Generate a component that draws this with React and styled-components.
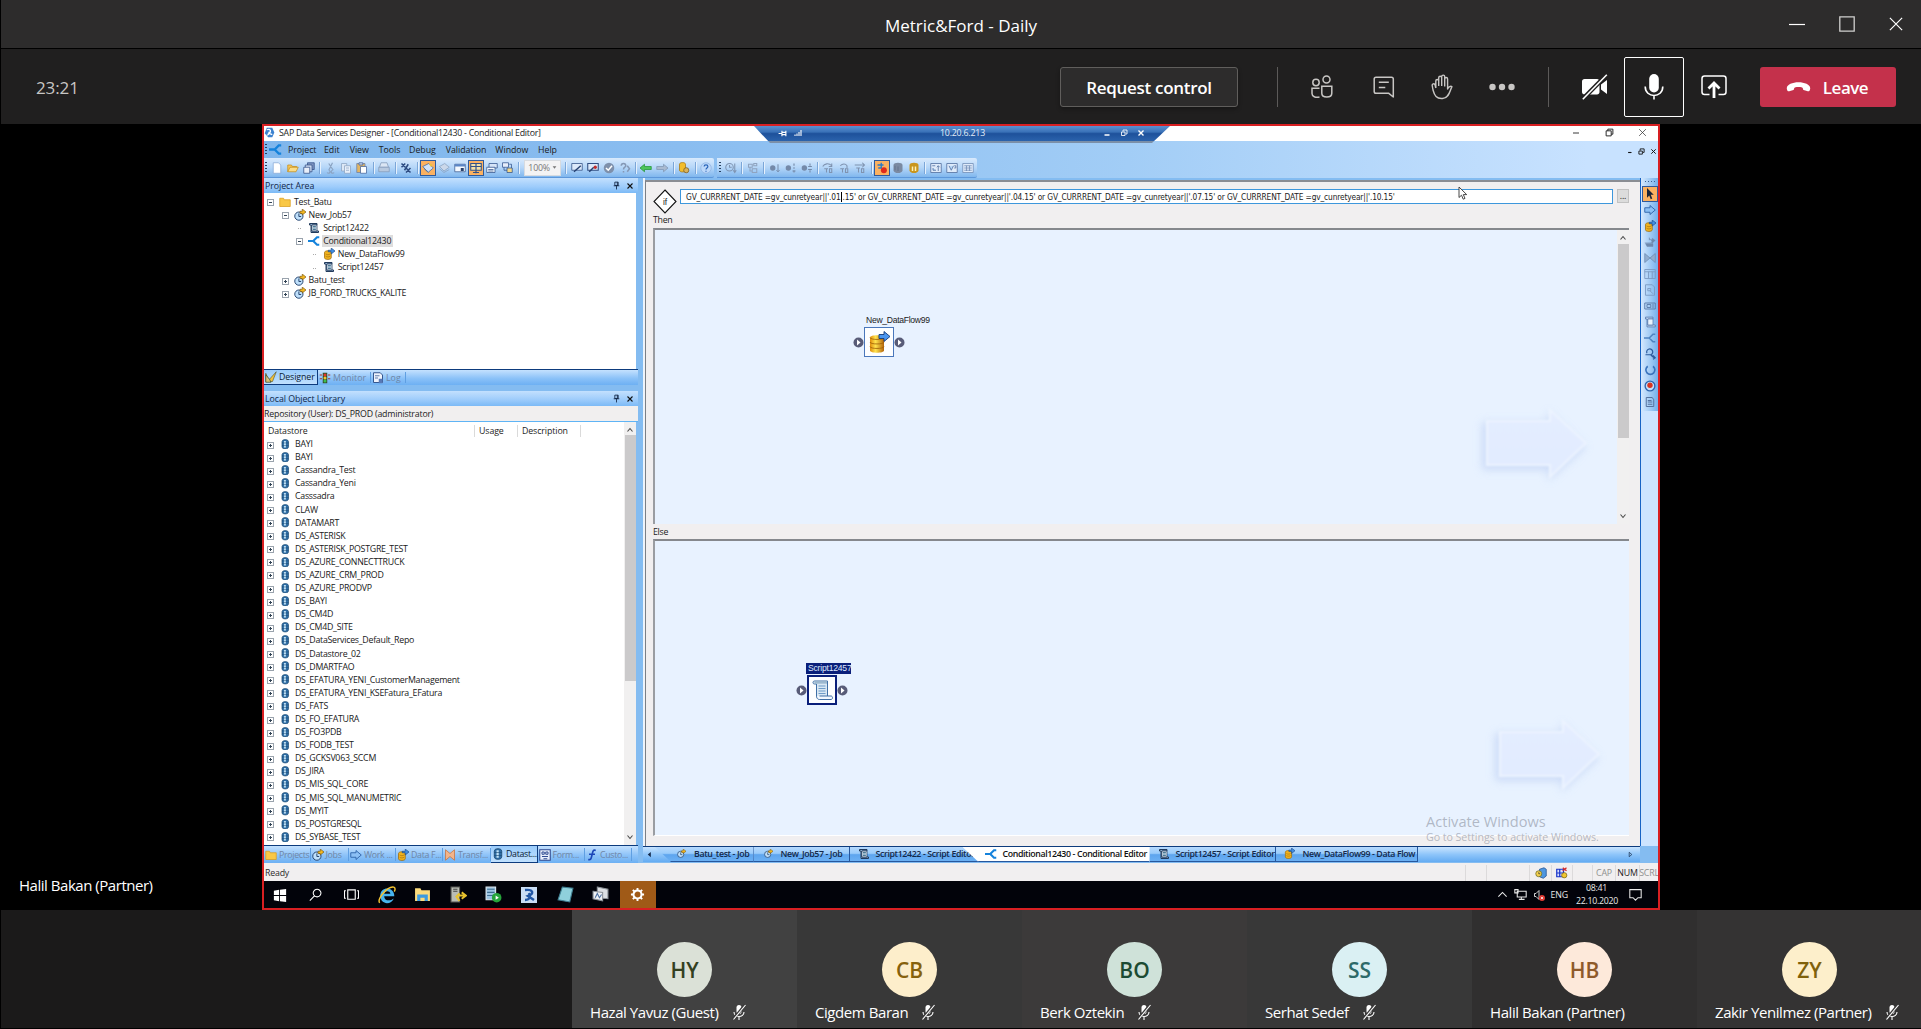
import React from "react";
import styled, { createGlobalStyle, css } from "styled-components";

const Global = createGlobalStyle`
  * { box-sizing: border-box; }
  body { margin: 0; background: #000; overflow: hidden; }
  svg { display: block; flex: none; }
`;

const ui = `"Open Sans", "Noto Sans", sans-serif`;

/* ---------- meeting shell ---------- */

const Shell = styled.div`
  width: 1921px;
  height: 1029px;
  display: flex;
  flex-direction: column;
  background: #000;
  border-left: 1px solid #000;
  border-bottom: 1px solid #000;
  font-family: ${ui};
  color: #fff;
  overflow: hidden;
  white-space: nowrap;
`;

const TitleBar = styled.header`
  height: 49px;
  flex: none;
  display: grid;
  grid-template-columns: 1fr auto 1fr;
  align-items: center;
  background: #2d2c2c;
  border-bottom: 1px solid #000;
`;

const MeetingTitle = styled.div`
  font-size: 17px;
  letter-spacing: 0;
  line-height: 22px;
  padding-top: 3px;
  grid-column: 2;
`;

const WindowButtons = styled.div`
  display: flex;
  justify-content: flex-end;
  align-items: center;
  gap: 34px;
  padding: 0 18px 1px 0;
`;

const CallBar = styled.div`
  height: 75px;
  flex: none;
  display: flex;
  align-items: center;
  background: #201f1f;
  padding: 1px 25px 0 35px;
`;

const Timer = styled.div`
  flex: 1;
  font-size: 17px;
  letter-spacing: -0.1px;
  padding-top: 1px;
  color: #c8c6c4;
`;

const RequestButton = styled.button`
  width: 178px;
  height: 40px;
  padding: 1px 0 0;
  border: 1px solid #605e5c;
  border-radius: 3px;
  background: #2d2c2c;
  color: #fff;
  font: 600 17px ${ui};
  letter-spacing: -0.3px;
  box-shadow: 0 2px 4px rgba(0, 0, 0, 0.3);
`;

const BarDivider = styled.div`
  width: 1px;
  height: 40px;
  background: #5c5a59;
  margin: 0 ${(p) => p.$right}px 0 ${(p) => p.$left}px;
`;

const CallIcons = styled.div`
  display: flex;
  align-items: center;
`;

const CallIcon = styled.div`
  width: 60px;
  height: 60px;
  display: flex;
  align-items: center;
  justify-content: center;
  border-radius: 2px;
  padding-left: ${(p) => p.$nudge || 0}px;
  color: ${(p) => (p.$dim ? "#c8c6c4" : "#fff")};
  border: ${(p) => (p.$focused ? "1px solid #fff" : "0")};
`;

const LeaveButton = styled.button`
  width: 136px;
  height: 40px;
  margin-left: 16px;
  padding: 0 2px 0 0;
  border: 0;
  border-radius: 3px;
  background: #c4314b;
  color: #fff;
  display: flex;
  align-items: center;
  justify-content: center;
  gap: 12px;
  font: 600 17px ${ui};
  letter-spacing: -0.5px;
`;

const Stage = styled.main`
  height: 786px;
  flex: none;
  display: grid;
  grid-template-columns: 261px 1398px 1fr;
  background: #000;
`;

const Presenter = styled.div`
  align-self: end;
  padding: 0 0 15px 18px;
  font-size: 15px;
  line-height: 20px;
  letter-spacing: -0.47px;
`;

const FilmStrip = styled.footer`
  height: 118px;
  flex: none;
  display: flex;
  background: #1b1a1a;
  padding-left: 571px;
`;

const Tile = styled.div`
  width: 225px;
  flex: none;
  height: 118px;
  display: flex;
  flex-direction: column;
  align-items: center;
  padding-top: 32px;
  background: ${(p) => p.$bg};
`;

const Avatar = styled.div`
  width: 55px;
  height: 55px;
  border-radius: 50%;
  display: flex;
  align-items: center;
  justify-content: center;
  background: ${(p) => p.$bg};
  color: ${(p) => p.$fg};
  font-size: 21px;
  font-weight: 600;
`;

const TileName = styled.div`
  align-self: stretch;
  display: flex;
  align-items: center;
  gap: 13px;
  padding: 5px 0 0 18px;
  font-size: 15px;
  line-height: 20px;
  letter-spacing: -0.43px;
`;

/* ---------- remote desktop ---------- */

const Remote = styled.section`
  width: 1398px;
  height: 786px;
  border: 2px solid #d81f22;
  display: flex;
  flex-direction: column;
  position: relative;
  overflow: hidden;
  background: #f1eff0;
  color: #1c1c1c;
  font-size: 8.8px;
  line-height: 12px;
  letter-spacing: -0.2px;
`;

const AppTitle = styled.div`
  height: 15px;
  flex: none;
  display: flex;
  align-items: center;
  gap: 4px;
  background: #fff;
  padding: 0 11px 2px 0;
  span { flex: 1; letter-spacing: -0.24px; }
`;

const AppButtons = styled.div`
  display: flex;
  align-items: center;
  gap: 24.5px;
`;

const Connection = styled.div`
  position: absolute;
  left: 490px;
  top: 0;
  width: 416px;
  height: 17px;
  clip-path: polygon(0 0, 100% 0, 398px 100%, 16px 100%);
  background: linear-gradient(#5b8fcf 0, #3a72b8 35%, #1e519b 45%, #2a62ab 86%, #7b8fa8 90%);
  display: grid;
  grid-template-columns: 186px 1fr 67px;
  align-items: center;
  color: #e4edf8;
  padding-bottom: 3px;
`;

const ConnGroup = styled.div`
  display: flex;
  align-items: center;
  gap: ${(p) => p.$gap}px;
  padding-left: ${(p) => p.$pad}px;
`;

const Bars = styled.div`
  flex: none;
  height: 37px;
  background: linear-gradient(90deg, #7fb6ec 0, #8abdf0 30%, #a2cdf6 62%, #c8e2ff 95%);
`;

const MenuRow = styled.nav`
  height: 17px;
  display: flex;
  align-items: center;
  padding-left: 1px;
`;

const MenuItem = styled.span`
  width: ${(p) => p.$w}px;
  letter-spacing: -0.03px;
  padding-top: 1px;
`;

const MdiButtons = styled.div`
  margin-left: auto;
  display: flex;
  gap: 5px;
  padding: 4px 1px 0 0;
`;

const ToolRow = styled.div`
  height: 20px;
  display: flex;
  gap: 3px;
`;

const ToolStrip = styled.div`
  height: 20px;
  display: flex;
  align-items: center;
  width: ${(p) => p.$w}px;
  padding-left: ${(p) => p.$pad}px;
  border-radius: 0 2px 2px 0;
  background: linear-gradient(#d9eafd, #b5d6f8 50%, #80b7ee);
  border-bottom: 1px solid #5d97da;
`;

const ToolCell = styled.div`
  width: ${(p) => (p.$vertical ? 16 : 15.9)}px;
  height: 16px;
  flex: none;
  display: flex;
  align-items: center;
  justify-content: center;
  ${(p) =>
    p.$active &&
    css`
      background: #fbb161;
      border: 1px solid #2f5a9c;
    `}
`;

const ToolSep = styled.div`
  width: 1px;
  height: 12px;
  margin: 0 2.5px;
  background: #7ba6d8;
  box-shadow: 1px 0 #e6f1fd;
`;

const Grip = styled.div`
  width: 2px;
  height: 12px;
  margin-right: 2px;
  background: repeating-linear-gradient(#27405f 0 1.5px, transparent 1.5px 3px);
`;

const Zoom = styled.div`
  width: 37px;
  height: 16px;
  margin: 0 2px 0 3px;
  border: 1px solid #d7dbe0;
  background: #f3f3f4;
  color: #777;
  display: flex;
  align-items: center;
  justify-content: space-between;
  padding: 0 3px;
`;

const Body = styled.div`
  height: 685px;
  flex: none;
  display: grid;
  grid-template-columns: 374px 7px 995px 18px;
  background: #84bcf1;
`;

const Dock = styled.aside`
  display: flex;
  flex-direction: column;
  min-width: 0;
  overflow: hidden;
`;

const DockHeader = styled.div`
  height: 15px;
  flex: none;
  display: flex;
  align-items: center;
  background: linear-gradient(#c3e0fe, #9ccbfb 60%, #7cbaf6);
  padding: 0 4px 0 1px;
  color: #12284a;
  span { flex: 1; letter-spacing: -0.06px; }
  svg + svg { margin-left: 5px; }
`;

const ProjectTree = styled.div`
  height: 176px;
  flex: none;
  background: #fff;
  margin-right: 2px;
  padding-top: 2px;
`;

const TreeRow = styled.div`
  height: 13.1px;
  display: flex;
  align-items: center;
  padding-left: ${(p) => 3 + p.$level * 14.6}px;
`;

const Expander = styled.span`
  width: 7px;
  height: 7px;
  flex: none;
  margin-right: ${(p) => p.$gap || 5}px;
  position: relative;
  top: 1px;
  border: 1px solid ${(p) => (p.$leaf ? "transparent" : "#9aa3ad")};
  background: ${(p) =>
    p.$leaf
      ? "repeating-linear-gradient(90deg,#aaa 0 1px,transparent 1px 2px) right center/4px 1px no-repeat"
      : p.$open
        ? "linear-gradient(#345,#345) center/3px 1px no-repeat"
        : "linear-gradient(#345,#345) center/3px 1px no-repeat, linear-gradient(#345,#345) center/1px 3px no-repeat"};
`;

const TreeLabel = styled.span`
  margin-left: ${(p) => p.$gap || 2}px;
  padding: 0 2px 0 1px;
  background: ${(p) => (p.$sel ? "#dedddd" : "none")};
  color: #202020;
  letter-spacing: -0.26px;
`;

const DockTabs = styled.div`
  height: ${(p) => p.$h}px;
  flex: none;
  display: flex;
  border-top: 1px solid #0d3b7d;
  background: linear-gradient(#c4e1fe, #8cc2f8 55%, #6db0f3);
`;

const DockTab = styled.div`
  width: ${(p) => p.$w}px;
  flex: none;
  display: flex;
  align-items: center;
  gap: 2px;
  padding-left: 1px;
  color: ${(p) => (p.$on ? "#0a1a33" : "#6f86a5")};
  letter-spacing: ${(p) => p.$ls || 0}px;
  ${(p) =>
    p.$on
      ? css`
          background: linear-gradient(#9accfb, #c0e0fe);
          border-right: 1px solid #0d3b7d;
          border-bottom: 1px solid #0d3b7d;
        `
      : css`
          border-right: 1px solid #5f9fe2;
          margin: 2px 0;
        `}
`;

const Gap = styled.div`
  height: 6px;
  flex: none;
`;

const Repo = styled.div`
  height: 16px;
  flex: none;
  background: #f1efef;
  border-bottom: 1.5px solid #5fb4f5;
  padding-top: 2px;
  letter-spacing: -0.2px;
`;

const Library = styled.div`
  flex: 1;
  min-height: 0;
  display: flex;
  margin-right: 2px;
  background: #fff;
`;

const LibraryMain = styled.div`
  flex: 1;
  min-width: 0;
`;

const LibraryHead = styled.div`
  height: 15.5px;
  display: grid;
  grid-template-columns: 211px 43px 63px;
  align-items: center;
  padding-top: 2px;
  span { padding-left: 4px; border-right: 1px solid #dadada; letter-spacing: -0.1px; }
`;

const ScrollTrack = styled.div`
  width: 12px;
  flex: none;
  display: flex;
  flex-direction: column;
  align-items: center;
  justify-content: space-between;
  background: #f1f0f0;
  padding: 4px 0;
`;

const Thumb = styled.div`
  width: 11px;
  height: ${(p) => p.$h}px;
  background: #cbcacb;
  margin-top: ${(p) => p.$mt}px;
  margin-bottom: auto;
`;

const Splitter = styled.div`
  border-right: 2px solid #eef4fb;
  margin-bottom: 17px;
`;

const Editor = styled.div`
  display: flex;
  flex-direction: column;
  min-width: 0;
`;

const EditorPane = styled.div`
  height: 666px;
  flex: none;
  display: flex;
  flex-direction: column;
  background: #f1eff0;
  border-top: 2px solid #8a8d93;
  border-left: 1px solid #7a7f86;
  padding: 0 11px 0 7px;
  margin-top: 2px;
`;

const Condition = styled.div`
  height: 32px;
  display: flex;
  padding-top: 7px;
`;

const ConditionField = styled.div`
  width: 934px;
  height: 15px;
  margin: 0 4px 0 3px;
  background: #fff;
  border: 1px solid #3d97dc;
  padding-left: 5px;
  font-family: "DejaVu Sans Condensed", "DejaVu Sans", sans-serif;
  font-stretch: condensed;
  font-size: 8.3px;
  line-height: 14px;
  letter-spacing: -0.145px;
`;

const Caret = styled.span`
  display: inline-block;
  width: 1px;
  height: 10px;
  margin-right: 1px;
  vertical-align: -2px;
  background: #000;
`;

const Browse = styled.div`
  width: 12px;
  height: 14px;
  background: #dcdcdc;
  border: 1px solid #c2c2c2;
  text-align: center;
  line-height: 12px;
`;

const BranchLabel = styled.div`
  height: ${(p) => p.$h}px;
  line-height: 12px;
  padding-top: ${(p) => p.$pt}px;
  letter-spacing: -0.3px;
`;

const Canvas = styled.div`
  height: ${(p) => p.$h}px;
  flex: none;
  position: relative;
  display: flex;
  justify-content: flex-end;
  background: #e8f2ff;
  border-top: 2px solid #85888d;
  border-left: 2px solid #9a9da2;
  border-bottom: ${(p) => (p.$edge ? "1.5px solid #fff" : "0")};
`;

const Node = styled.div`
  position: absolute;
  left: ${(p) => p.$x}px;
  top: ${(p) => p.$y}px;
  width: 52px;
  display: flex;
  flex-direction: column;
`;

const NodeLabel = styled.span`
  align-self: flex-start;
  margin-left: ${(p) => (p.$sel ? 10 : 13)}px;
  padding: 0 0 0 ${(p) => (p.$sel ? 2 : 0)}px;
  height: 11px;
  line-height: 11px;
  font-family: "Liberation Sans", Arial, sans-serif;
  font-size: 8.6px;
  letter-spacing: ${(p) => (p.$sel ? -0.22 : -0.3)}px;
  background: ${(p) => (p.$sel ? "#0a1f7a" : "none")};
  color: ${(p) => (p.$sel ? "#dfe8ff" : "#222")};
`;

const NodeBody = styled.div`
  display: flex;
  align-items: center;
  margin-top: 1px;
`;

const NodeBox = styled.div`
  width: 30px;
  height: 30px;
  background: #fdfeff;
  border: ${(p) => (p.$sel ? "2px solid #0a1f7a" : "1px solid #4a77bb")};
  display: flex;
  align-items: center;
  justify-content: center;
`;

const ArrowMark = styled.div`
  position: absolute;
  left: ${(p) => p.$x}px;
  top: ${(p) => p.$y}px;
`;

const Activate = styled.div`
  position: absolute;
  left: 1162px;
  top: 685px;
  color: rgba(128, 134, 148, 0.55);
  div { font-size: 14.6px; line-height: 20px; letter-spacing: 0; }
  p { margin: 0; font-size: 10.7px; line-height: 13px; letter-spacing: -0.07px; }
`;

const Pointer = styled.div`
  position: absolute;
  left: 1194px;
  top: 60px;
`;

const DocTabs = styled.div`
  height: 16px;
  flex: none;
  display: flex;
  align-items: stretch;
  background: linear-gradient(#c9e4fe, #8ec5fa 50%, #64abf2);
  border-top: 1px solid #0d3b7d;
  margin-left: -2px;
  font-weight: 600;
  color: #12233f;
`;

const TabScroll = styled.div`
  width: ${(p) => p.$w}px;
  margin-left: ${(p) => (p.$last ? "auto" : 0)};
  display: flex;
  align-items: center;
  justify-content: center;
`;

const DocTab = styled.div`
  width: ${(p) => p.$w}px;
  flex: none;
  display: flex;
  align-items: center;
  padding: 0 0 1px ${(p) => p.$pad}px;
  gap: ${(p) => p.$gap || 5}px;
  border-right: 1px solid #27579d;
  border-bottom: 1px solid #27579d;
  letter-spacing: -0.37px;
  background: ${(p) =>
    p.$on ? "#fff" : "linear-gradient(#b6d9fd, #9accfb 45%, #5ea5ee 55%, #6bb0f4)"};
  color: ${(p) => (p.$on ? "#111" : "#14294a")};
  ${(p) => p.$slant && "clip-path: polygon(0 0, 100% 0, 100% 100%, 16px 100%);"}
  ${(p) => p.$on && "clip-path: polygon(0 0, 100% 0, 100% 100%, 16px 100%); margin-left: -15px; border-right: 0;"}
`;

const Palette = styled.div`
  border-left: 1.5px solid #1763c4;
  background: #cde4ff;
  margin-bottom: 17px;
`;

const PaletteStrip = styled.div`
  display: flex;
  flex-direction: column;
  align-items: center;
  height: 233px;
  padding-top: 8px;
  background:
    repeating-linear-gradient(90deg, #3a5f93 0 1px, transparent 1px 3px) 4px 3px / 11px 1px no-repeat,
    linear-gradient(90deg, #d6e9fe, #74b0ec);
`;

const StatusBar = styled.div`
  height: 18px;
  flex: none;
  display: flex;
  align-items: center;
  background: #f1eff0;
  padding: 2px 0 0 1px;
  color: #2b2b2b;
`;

const StatusCell = styled.div`
  width: ${(p) => p.$w}px;
  height: 16px;
  flex: none;
  display: flex;
  align-items: center;
  justify-content: center;
  border-left: 1px solid #dcdadb;
  margin-left: ${(p) => (p.$first ? "auto" : 0)};
  color: ${(p) => (p.$dim ? "#8f8f8f" : "#222")};
`;

const TaskBar = styled.div`
  flex: 1;
  display: flex;
  align-items: center;
  background: #02030a;
  color: #e8e8e8;
`;

const TaskIcon = styled.div`
  width: 35.6px;
  height: 27px;
  flex: none;
  display: flex;
  align-items: center;
  justify-content: center;
  padding-right: ${(p) => (p.$on ? 0 : 3)}px;
  background: ${(p) => (p.$on ? "#a05a17" : "none")};
`;

const Tray = styled.div`
  margin-left: auto;
  display: flex;
  align-items: center;
  gap: 6px;
  padding-right: 16px;
  letter-spacing: -0.15px;
`;

const Clock = styled.div`
  width: 41px;
  margin: 0 6px 0 2px;
  text-align: center;
  line-height: 13px;
  letter-spacing: -0.3px;
`;

/* ---------- drawings ---------- */

const Svg = ({ s = 12, w, h, vb = "0 0 16 16", children }) => (
  <svg width={w || s} height={h || s} viewBox={vb} fill="none">
    {children}
  </svg>
);

const glyphs = {
  page: <path d="M3 1h7l3 3v11H3z" fill="#fff" stroke="#88a9d6" />,
  open: <><path d="M1 13V4h5l1 2h6v2" fill="#f6c658" stroke="#c48f1d" /><path d="M1 13l3-6h11l-3 6z" fill="#fbdc88" stroke="#c48f1d" /></>,
  saveAll: <><path d="M6 1h9v9H6z" fill="#7d94c0" stroke="#304d84" /><path d="M3 4h9v9H3z" fill="#cfdcf2" stroke="#304d84" /><path d="M1 7h8v8H1z" fill="#e8effa" stroke="#304d84" /></>,
  cut: <path d="M10 1L5 11M5 2l6 9M3 14a2 2 0 1 0 2-3M12 14a2 2 0 1 1-2-3" stroke="#8ba3c2" strokeWidth="1.6" />,
  copy: <><path d="M2 2h7v10H2z" fill="#dde8f5" stroke="#8ba3c2" /><path d="M6 5h8v10H6z" fill="#e8f0fa" stroke="#8ba3c2" /><path d="M8 8h4M8 11h4" stroke="#8ba3c2" /></>,
  paste: <><path d="M1 2h11v12H1z" fill="#e2b562" stroke="#6b7fa5" /><path d="M6 6h8v9H6z" fill="#fff" stroke="#44639b" /><path d="M4 1h5v3H4z" fill="#c9d3e4" stroke="#44639b" /></>,
  print: <><path d="M4 1h8l2 6H2z" fill="#dbe6f4" stroke="#8399b8" /><path d="M1 7h14v6H1z" fill="#b8c9df" stroke="#8399b8" /></>,
  find: <path d="M2 2l5 5m0-5L2 7M8 8l6 6m0-6l-6 6M6 11l5-8" stroke="#2c4a80" strokeWidth="2" />,
  sheets: <><path d="M1 6l8-4 6 6-7 6z" fill="#cfe2fb" stroke="#3d669f" /><path d="M9 2l5 1-2 4z" fill="#f2c13c" /><path d="M3 9l5 4" stroke="#3d669f" /></>,
  layer: <><path d="M2 6l7-4 6 5-7 5z" fill="#cbd8ea" stroke="#8aa0bd" /><path d="M2 9l6 5 7-4" stroke="#8aa0bd" /></>,
  windowDot: <><path d="M1 3h14v10H1z" fill="#f5f9ff" stroke="#3c5b8f" /><path d="M1 3h14v3H1z" fill="#5b86c6" /><path d="M9 8h4v4H9z" fill="#27406c" /></>,
  grid: <><path d="M1 2h14v9H1z" fill="#f7e2a5" stroke="#31538c" strokeWidth="1.4" /><path d="M1 6h14M8 2v13M4 14h8" stroke="#31538c" strokeWidth="1.6" /></>,
  windows: <><path d="M4 2h11v6H4z" fill="#d7e5f8" stroke="#31538c" /><path d="M1 7h11v7H1z" fill="#f6faff" stroke="#31538c" /><path d="M3 10h7M3 12h7" stroke="#31538c" /></>,
  tree: <><path d="M2 1h8v6H2z" fill="#e7eefa" stroke="#31538c" /><path d="M8 8h7v6H8z" fill="#f2d789" stroke="#31538c" /><path d="M4 7v4h4M11 3h3v5" stroke="#31538c" /></>,
  check: <><path d="M1 2h14v9H1z" fill="#dce9fa" stroke="#2f4d82" /><path d="M4 13l9-8" stroke="#253f70" strokeWidth="1.8" /></>,
  checkRed: <><path d="M1 2h14v9H1z" fill="#dce9fa" stroke="#2f4d82" strokeWidth="1.4" /><path d="M3 13l6-6" stroke="#253f70" strokeWidth="2" /><circle cx="11" cy="7" r="2.2" fill="#c02b2b" /></>,
  okRound: <><circle cx="8" cy="8" r="7" fill="#7e90ab" /><path d="M4 8l3 3 5-6" stroke="#fff" strokeWidth="2" /></>,
  help2: <path d="M3 5c0-4 6-4 6 0 0 2-3 2-3 5M6 12v2M11 5l3 4-3 4" stroke="#8598b5" strokeWidth="2" />,
  back: <path d="M0 8l6-5v3h9v4H6v3z" fill="#4cc45a" stroke="#23953a" />,
  fwd: <path d="M16 8l-6-5v3H1v4h9v3z" fill="#a9bad0" stroke="#7f95b3" />,
  dbGear: <><path d="M2 3c0-3 8-3 8 0v8c0 3-8 3-8 0z" fill="#f2bd2c" stroke="#a67511" /><circle cx="11" cy="11" r="3.4" fill="#d9b25a" stroke="#7a5a1c" /></>,
  help: <><circle cx="8" cy="8" r="7" fill="#bcd8fa" stroke="#8fb3e2" /><path d="M5.500 6c0-3 5-3 5 0 0 2-2.500 2-2.500 4M8 11.500v1.500" stroke="#2964b8" strokeWidth="1.6" /></>,
  timer: <><circle cx="6" cy="7" r="5" stroke="#7f95b3" strokeWidth="1.4" /><path d="M6 4v3h3M13 2v11m-2-2l2 3 2-3" stroke="#7f95b3" strokeWidth="1.4" /></>,
  steps: <path d="M2 3h5v4H2zM9 2h4v3H9zM7 9h6v5H7zM4 7v5h3" stroke="#8fa3bf" strokeWidth="1.4" />,
  dotDown: <><circle cx="5" cy="8" r="3.6" fill="#7489a8" /><path d="M12 3v10m-2-2l2 2 2-2" stroke="#7489a8" strokeWidth="1.3" /></>,
  dotSteps: <><circle cx="4.500" cy="8" r="3.600" fill="#7489a8" /><path d="M12 2v3m0 2v2m0 2v3M10 12h4" stroke="#7489a8" strokeWidth="1.5" /></>,
  dotLines: <><circle cx="4.500" cy="8" r="3.600" fill="#7489a8" /><path d="M9.500 6h5M9.500 10h5M12 2v3m0 6v3" stroke="#7489a8" strokeWidth="1.4" /></>,
  stepOver: <path d="M1 6c2-4 8-5 12-1m0-3v4H9M3 9h5M6 9v5M10 9h3v5h-3z" stroke="#7f93b0" strokeWidth="1.4" />,
  stepIn: <path d="M3 5c3-3 7-3 9 0v3M3 9h5M6 9v5M10 9h3v5h-3z" stroke="#7f93b0" strokeWidth="1.4" />,
  stepOut: <path d="M1 4h13m-3-3l3 3-3 3M3 8h5M6 8v6M10 9h3v5h-3z" stroke="#7f93b0" strokeWidth="1.4" />,
  record: <><path d="M2 4h8M7 1v7M3 8h5" stroke="#2b7ac6" strokeWidth="1.8" /><circle cx="10.500" cy="11" r="4" fill="#e02a1c" /></>,
  db: <><path d="M2 4c0-4 12-4 12 0v7c0 5-12 5-12 0z" fill="#7b8aa2" /><path d="M4 5v6M8 6v6" stroke="#5d6c86" /></>,
  dbPause: <><path d="M2 4c0-4 12-4 12 0v7c0 5-12 5-12 0z" fill="#c9951d" /><path d="M6 6v6M10 6v6" stroke="#fff1b8" strokeWidth="2" /></>,
  panelA: <path d="M1 2h14v12H1zM3 5h4M4 8v3h4M11 12V5m-2 2l2-2 2 2" stroke="#5d7ba8" strokeWidth="1.2" fill="#dfebfa" />,
  panelB: <path d="M1 2h14v12H1zM4 5l3 6 3-6M11 5h2v3h-2" stroke="#5d7ba8" strokeWidth="1.2" fill="#dfebfa" />,
  panelC: <path d="M1 2h14v12H1zM3 5h10M3 8h10M3 11h10M6 5v7M10 5v7" stroke="#6d89b3" fill="#dfebfa" />,
  folder: <path d="M1 14V3h5l1 2h8v9z" fill="#f9c846" stroke="#d89d1f" />,
  job: <><circle cx="6.500" cy="9.500" r="5.500" fill="#bfe0fb" stroke="#25446f" strokeWidth="1.3" /><path d="M6.500 6v4h3" stroke="#25446f" strokeWidth="1.3" /><path d="M8 6V3h3V0l5 4-5 4V6z" fill="#f4b81f" stroke="#6b4a08" strokeWidth=".8" /></>,
  script: <><path d="M2 2h10v2H5v8h9v2H4V4H2z" fill="#a9c9ea" stroke="#1d3557" strokeWidth="1.3" /><path d="M5 4h7v8H5z" fill="#e6f1fb" stroke="#1d3557" /><path d="M6.500 6h4M6.500 8h4M6.500 10h4" stroke="#2b5f7f" strokeWidth="1.100" /></>,
  scriptPale: <><path d="M2 1.500h10v2.500H5v8h10v2.500H4V4H2z" fill="#cfe1f8" stroke="#5277ab" strokeWidth="1.100" /><path d="M5 4h7v8H5z" fill="#eaf3fd" stroke="#5277ab" /></>,
  scriptBig: <><path d="M3.500 2h13v16h-11V5H3.500c-2 0-2-3 0-3z" fill="#d9e8f4" stroke="#3f6fa5" /><path d="M3.500 2.200h12.500v2.500H3.500z" fill="#9db9cf" /><path d="M7.500 7h7M7.500 9.500h7M7.500 12h7M7.500 14.500h7" stroke="#6f9cc8" strokeWidth="1.100" /><path d="M8.500 17H20c2 0 2 3.500 0 3.500H8.500c-3 0-3-3.500-3-3.500" fill="#f2f8ff" stroke="#3f6fa5" /></>,
  branch: <path d="M0 8h7l5-5h3M7 8l5 5h3" stroke="#1583dc" strokeWidth="2.800" />,
  branchDim: <path d="M0 8h7l5-5h3M7 8l5 5h3" stroke="#4f84c2" strokeWidth="2.200" />,
  flow: <><path d="M2 6c0-3 9-3 9 0v7c0 3-9 3-9 0z" fill="#f0b21f" stroke="#9c6a09" /><path d="M3.500 8c2 1.200 4 1.200 6 0M3.500 11c2 1.200 4 1.200 6 0" stroke="#9c6a09" strokeWidth=".8" /><path d="M7 5V3h4V0l5 4-5 4V5z" fill="#3f8fe6" stroke="#143f7c" strokeWidth=".8" /></>,
  flowBig: <>
    <defs><linearGradient id="gold"><stop offset="0" stopColor="#e08c0a" /><stop offset=".4" stopColor="#ffe34d" /><stop offset="1" stopColor="#b3640a" /></linearGradient></defs>
    <path d="M2 6.500c0-3 14-3 14 0v13c0 3-14 3-14 0z" fill="url(#gold)" />
    <path d="M2 6.500c0 2.600 14 2.600 14 0M2 11c0 2.600 14 2.600 14 0M2 15.500c0 2.600 14 2.600 14 0" stroke="#9c5d06" strokeWidth=".8" />
    <path d="M11 7.500V3.500h5V.5l6 5-6 5v-3z" fill="#4a95ee" stroke="#123a7c" strokeWidth=".9" /></>,
  store: <><path d="M4 2c2-1.500 6-1.500 8 0l1 2v8l-1 2c-2 1.500-6 1.500-8 0l-1-2V4z" fill="#2f6ea6" stroke="#174670" /><path d="M6 3h3v10H6z" fill="#bfe0f5" /><path d="M3 6h10M3 10h10" stroke="#174670" strokeWidth=".8" /></>,
  design: <><path d="M1 3l4 9 10-11-5 13H1z" fill="#f3c23b" stroke="#4d4f2a" strokeWidth=".8" /><path d="M1 5l5 6 2 4H1z" fill="#d8c27a" stroke="#3b4f2d" /></>,
  light: <><path d="M5 1h6v14H5z" fill="#37512a" /><circle cx="8" cy="4" r="2" fill="#e5372a" /><circle cx="8" cy="8" r="2" fill="#f7c52f" /><circle cx="8" cy="12" r="2" fill="#3bbf4d" /><path d="M1 4h3M1 9h3M12 4h3M12 9h3" stroke="#a3342a" strokeWidth="1.500" /></>,
  log: <><path d="M2 1h9l3 3v10H2z" fill="#eef3fd" stroke="#31538c" strokeWidth="1.300" /><path d="M4 5h6M4 8h4" stroke="#31538c" /><path d="M9 9h5v6H9z" fill="#5878b5" /></>,
  work: <path d="M1 5h7V2l7 6-7 6v-3H1z" fill="#8cc0f5" stroke="#2e62a8" strokeWidth="1.200" />,
  transform: <path d="M2 1l6 5 6-5v14l-6-5-6 5z" fill="#f3b48a" stroke="#c9713b" />,
  format: <><path d="M1 1h14v14H1z" fill="#e9effc" stroke="#2c478f" strokeWidth="1.400" /><path d="M4 4h3v3H4zM9 4h3v3H9zM4 10h8M6 13h5" stroke="#2c478f" strokeWidth="1.300" /></>,
  fn: <path d="M13 2c-4-2-4 2-5 6s-1 7-5 6M4 7h8" stroke="#1b46b8" strokeWidth="2.200" />,
  select: <path d="M4 0v13l3-3 2 5 2-1-2-5h4z" fill="#1a2336" />,
  transIn: <path d="M1 9h8l3-3v3M7 2v3h4V3l4 3-4 3V8M2 10h10v4H4z" fill="#6f89ad" stroke="#6f89ad" strokeWidth=".6" />,
  bowtie: <path d="M1 2l7 6-7 6zM15 2L8 8l7 6z" fill="#93aed0" stroke="#6b8ab2" />,
  table: <path d="M1 2h14v12H1zM1 5h14M6 5v9M11 5v9" stroke="#7c9bc3" strokeWidth="1.200" />,
  sheet: <path d="M2 1h9l3 3v11H2zM5 6h4v3H5zM8 9l4 4" stroke="#7c9bc3" strokeWidth="1.200" />,
  message: <path d="M1 4h14v8H1zM4 6h5v4H4zM12 5v6" stroke="#5f7fae" strokeWidth="1.300" />,
  loop: <path d="M4 7a4 4 0 1 1 5 2H2m7 0c3 3 4 4 6 4m-3-3l3 3-3 2" stroke="#2d5c9e" strokeWidth="1.600" />,
  ring: <path d="M5 3a6 6 0 1 0 7 0" stroke="#3b74bd" strokeWidth="2.200" />,
  catch: <><circle cx="8" cy="8" r="6.500" stroke="#2f65ad" strokeWidth="1.800" fill="#c6def9" /><circle cx="8" cy="7" r="3.600" fill="#d93520" /></>,
  doc: <path d="M3 2h8l2 3v9H3zM5 6h5M5 8h6M5 11h6" stroke="#53709c" strokeWidth="1.300" />,
  sap: <><path d="M4 1h8l3 7-3 7H6L1 9z" fill="#3b82cf" /><path d="M4 4c6-2 7 3 3 5l5 2M4 12c4-1 4-3 3-5" stroke="#fff" strokeWidth="1.800" /></>,
  statusDb: <><path d="M6 3l6-2 3 2v9l-4 3-5-2z" fill="#4f97e0" stroke="#1d4f93" /><circle cx="5" cy="9" r="4" fill="#f5d04c" stroke="#6b6b2a" /><path d="M5 7v2h2" stroke="#333" /></>,
  statusGrid: <><path d="M1 3h9v10H1zM5 3v10M1 8h9" stroke="#1531c8" strokeWidth="1.600" fill="#d8defc" /><circle cx="11" cy="11" r="3.500" fill="#f1c630" stroke="#7a6412" /><path d="M9 1l5 4m0-4L9 5" stroke="#d42a2a" strokeWidth="1.800" /></>,
  win: <path d="M1 3l6-1v6H1zM8 2l7-1v7H8zM1 9h6v6l-6-1zM8 9h7v7l-7-1z" fill="#fff" />,
  search: <path d="M7 9.500L1 15.500M10 1.500a4.700 4.700 0 1 1-.1 0z" stroke="#fff" strokeWidth="1.300" />,
  taskView: <path d="M4 3h8v10H4zM2 4H.5v8H2M14 4h1.500v8H14" stroke="#fff" strokeWidth="1.200" />,
  ie: <><path d="M14.500 9H5.500c0 4 5 5 8.500 2-2 6-12 6-12-2.500S14.500 0 14.500 9zM5.500 6.800h5.500C10.500 4 6 4 5.500 6.800z" fill="#48b4ee" /><path d="M1.500 15C-1 12 8 0 14 1c2 1 1 3 .5 4" stroke="#f5c431" strokeWidth="1.300" /></>,
  explorer: <><path d="M1 14V2h5l1 2h8v10z" fill="#fbdb7c" /><path d="M3 14V8h10v6h-3v-3H6v3z" fill="#3c9be0" /></>,
  server: <><path d="M1 1h8v14H1z" fill="#b9bcb4" stroke="#5d5d58" /><path d="M3 3h4M3 5h4" stroke="#444" /><path d="M7 9h8M11 6l4 3-4 3M9 7l-3 3 3 4" stroke="#e8c22e" strokeWidth="1.800" /></>,
  serverRun: <><path d="M1 1h9v12H1z" fill="#9cc4e2" stroke="#dfe9f1" /><path d="M2 3h7M2 6h7M2 9h7" stroke="#3e6d92" /><circle cx="11" cy="11" r="4.500" fill="#26a43a" /><path d="M10 9l3 2-3 2z" fill="#fff" /></>,
  designer: <><path d="M0 0h16v16H0z" fill="#c9ddf5" /><path d="M4 3c9-1 9 4 3 6l6 4M4 13c4 0 6-2 4-7" stroke="#2257a5" strokeWidth="2.400" /></>,
  notebook: <path d="M5 1l10 1-3 13-11-2z" fill="#8fd0dc" stroke="#3f7f92" />,
  monitor: <><path d="M5 1l10 2v9l-10-1z" fill="#dcdfe3" stroke="#8c9299" /><path d="M1 5l9 1v8l-9-2z" fill="#eff1f4" stroke="#8c9299" /><path d="M3 11l2-4 2 4 2-3" stroke="#4a6ea0" /></>,
  gear: <><circle cx="8" cy="8" r="4.300" stroke="#fff" strokeWidth="2.200" /><path d="M8 1v2.500M8 12.500V15M1 8h2.500M12.500 8H15M3 3l1.800 1.800M11.200 11.200L13 13M13 3l-1.800 1.800M4.800 11.200L3 13" stroke="#fff" strokeWidth="2" /></>,
  up: <path d="M2 11l6-6 6 6" stroke="#e8e8e8" strokeWidth="1.600" />,
  network: <path d="M4 4h11v7H4zM9 11v3M6 14h7M1 2h4v4H1z" stroke="#e8e8e8" strokeWidth="1.300" fill="#02030a" />,
  mute: <><path d="M2 6h2l4-4v12l-4-4H2z" stroke="#e8e8e8" strokeWidth="1.200" /><circle cx="12" cy="12" r="4" fill="#e03a32" /><path d="M10.500 10.500l3 3m0-3l-3 3" stroke="#fff" /></>,
  note: <path d="M1 2h14v10h-4l-3 3-3-3H1z" stroke="#e8e8e8" strokeWidth="1.300" />,
  pin: <path d="M5 2h6v6H5zM9.500 2v6M3 8.500h10M8 9v6" stroke="#0f2344" strokeWidth="1.500" />,
  x: <path d="M3 3l10 10M13 3L3 13" stroke="#111" strokeWidth="2.200" />,
  thinX: <path d="M2 2l12 12M14 2L2 14" stroke="#333" strokeWidth="1.300" />,
  dash: <path d="M2 8h12" stroke="#222" strokeWidth="1.800" />,
  restore: <path d="M2 5h9v9H2zM5 5V2h9v9h-3" stroke="#222" strokeWidth="1.700" />,
  dashBold: <path d="M3 12h9" stroke="#111" strokeWidth="3" />,
  restoreBold: <path d="M2 7h8v7H2zM5 6V2h9v8h-3" stroke="#111" strokeWidth="2" />,
  cDash: <path d="M3 12h10" stroke="#fff" strokeWidth="2.600" />,
  cRestore: <path d="M3 6h7v7H3zM6 5V2h8v8h-3" stroke="#fff" strokeWidth="1.700" />,
  cX: <path d="M3 3l10 10M13 3L3 13" stroke="#fff" strokeWidth="2.800" />,
  cPin: <path d="M1 8h6M7 3v10M8 6h6v4H8M14 3v10" stroke="#fff" strokeWidth="2" />,
  signal: <path d="M2 14v-3M6 14V9M10 14V6M14 14V2" stroke="#fff" strokeWidth="2.200" />,
  chevUp: <path d="M3 11l5-6 5 6" stroke="#4a4a4a" strokeWidth="2.200" />,
  chevDown: <path d="M3 5l5 6 5-6" stroke="#4a4a4a" strokeWidth="2.200" />,
  triLeft: <path d="M11 2v12L4 8z" fill="#14294a" />,
  triRight: <path d="M5 3v10l6-5z" stroke="#14294a" strokeWidth="1.600" />,
};

const Icon = ({ n, s = 12 }) => <Svg s={s}>{glyphs[n]}</Svg>;

const BigIcon = ({ n }) => <Svg s={23} vb="0 0 23 23">{glyphs[n]}</Svg>;

const MutedMic = () => (
  <Svg w={14} h={17} vb="0 0 14 17">
    <rect x="4.500" y="1" width="5" height="9" rx="2.500" fill="#fff" />
    <path d="M2 8c0 6 10 6 10 0M7 12.500V16" stroke="#fff" strokeWidth="1.100" />
    <path d="M13 1L1 15.500" stroke="#3a3939" strokeWidth="2.800" />
    <path d="M13.500 1L1.500 15.500" stroke="#fff" strokeWidth="1.100" />
  </Svg>
);

const PeopleGlyph = () => (
  <Svg w={22} h={24} vb="0 0 22 24">
    <g stroke="currentColor" strokeWidth="1.500">
      <circle cx="5" cy="7.500" r="3.200" />
      <circle cx="15.500" cy="4.500" r="3.500" />
      <path d="M10.800 11.200h10v7c0 5-10 5-10 0z" />
      <path d="M8.500 13.200H1v5.300c0 3 3.500 4.500 7.500 3.500" />
    </g>
  </Svg>
);

const ChatGlyph = () => (
  <Svg w={22} h={24} vb="0 0 22 24">
    <path d="M3 2.200h15.500c1 0 1.800.8 1.800 1.800v18l-4.800-3.800H3c-1 0-1.800-.8-1.800-1.800V4c0-1 .8-1.800 1.800-1.800zM5.800 7.200h10M5.800 12.400h6.500" stroke="currentColor" strokeWidth="1.500" strokeLinejoin="round" />
  </Svg>
);

const HandGlyph = () => (
  <Svg w={22} h={26} vb="0 0 22 26">
    <path d="M4.800 14V7c0-2 2.900-2 2.900 0V3.800c0-2 3-2 3 0V2.600c0-2 3-2 3 0V5c0-2 2.900-2 2.900 0v10c1-2.500 3.100-3.300 4.400-2.300-2 3-2.500 11.500-9.500 11.800C5.500 25 3.500 21.500 2 16l-.8-4.500c-.3-2 2.400-2.300 2.900-.5l.7 3M7.700 7v5M10.700 3.500V12M13.700 5v7.500" stroke="currentColor" strokeWidth="1.400" strokeLinejoin="round" />
  </Svg>
);

const DotsGlyph = () => (
  <Svg w={26} h={8} vb="0 0 26 8">
    <g fill="currentColor"><circle cx="3.500" cy="4" r="3.200" /><circle cx="13" cy="4" r="3.200" /><circle cx="22.500" cy="4" r="3.200" /></g>
  </Svg>
);

const CameraOff = () => (
  <Svg w={27} h={26} vb="0 0 27 26">
    <path d="M3.500 5H16c1.500 0 2.500 1 2.500 2.500v10.500c0 1.500-1 2.500-2.500 2.500H3.500C2 20.500 1 19.500 1 18V7.500C1 6 2 5 3.500 5zM20 10.500L26 6v14l-6-4.500z" fill="#fff" />
    <path d="M26.500 0L2 24.800" stroke="#201f1f" strokeWidth="4.400" />
    <path d="M25.800.8L1.800 25.200" stroke="#fff" strokeWidth="1.600" />
  </Svg>
);

const MicGlyph = () => (
  <Svg w={20} h={26} vb="0 0 20 26">
    <rect x="5.200" y="0" width="9.600" height="18.500" rx="4.800" fill="#fff" />
    <path d="M1.200 12.500c0 12 17.600 12 17.600 0M10 21.500V25.500" stroke="#fff" strokeWidth="1.600" />
  </Svg>
);

const ShareGlyph = () => (
  <Svg w={26} h={24} vb="0 0 26 24">
    <path d="M8.500 19.500H3.500C2 19.500 1 18.500 1 17V3.500C1 2 2 1 3.500 1h19C24 1 25 2 25 3.500V17c0 1.500-1 2.500-2.500 2.500h-5" stroke="#fff" strokeWidth="1.500" />
    <path d="M13 23V9M7.500 13.500L13 8l5.500 5.500" stroke="#fff" strokeWidth="2.800" />
  </Svg>
);

const PhoneGlyph = () => (
  <Svg w={25} h={10} vb="0 0 25 10">
    <path d="M1 7.500C-.5 3 6 .3 12.500.3S25.500 3 24 7.500c-.3 1.800-1.500 2-3 1.600l-2.600-.8c-1.300-.4-1.600-1-1.600-2.300 0-1.500-8.600-1.500-8.600 0 0 1.300-.3 1.900-1.600 2.300L4 9.100C2.500 9.500 1.300 9.300 1 7.500z" fill="#fff" />
  </Svg>
);

const Port = () => (
  <Svg w={11} h={11} vb="0 0 11 11">
    <circle cx="5.500" cy="5.500" r="5" fill="#585c78" />
    <path d="M4 2.500l3.500 3L4 8.500z" fill="#fff" />
  </Svg>
);

const IfDiamond = () => (
  <svg width="24" height="25" viewBox="0 0 24 25">
    <path d="M12 1l11 11.500L12 24 1 12.500z" fill="#fff" stroke="#111" strokeWidth="1.100" />
    <text x="12" y="15.500" textAnchor="middle" fontSize="8.500" fill="#222" fontFamily="Liberation Sans, Arial, sans-serif">if</text>
  </svg>
);

const BigArrow = () => (
  <svg width="136" height="96" viewBox="0 0 136 96">
    <defs>
      <linearGradient id="arrowFill" x1="0" x2="0" y1="0" y2="1">
        <stop offset="0" stopColor="#e4edff" />
        <stop offset="1" stopColor="#e1ebff" />
      </linearGradient>
      <filter id="arrowSoft" x="-20%" y="-30%" width="140%" height="170%">
        <feGaussianBlur stdDeviation="4.500" />
      </filter>
      <filter id="arrowEdge">
        <feGaussianBlur stdDeviation=".8" />
      </filter>
    </defs>
    <path d="M12 27h66V16l38 36-38 34V75H12z" fill="#c3d4f5" opacity=".75" filter="url(#arrowSoft)" />
    <path d="M17 26h63V15l36 33-36 34V70H17z" fill="url(#arrowFill)" stroke="#edf4ff" strokeWidth="2.200" filter="url(#arrowEdge)" />
  </svg>
);

const CursorGlyph = () => (
  <Svg w={10} h={14} vb="0 0 10 14">
    <path d="M1 1v10.500l2.500-2.300 1.700 4 1.800-.8-1.700-3.800h3.400z" fill="#fff" stroke="#333" strokeWidth=".9" />
  </Svg>
);

/* ---------- data ---------- */

const people = [
  ["HY", "Hazal Yavuz (Guest)", "#414141", "#dbe1d7", "#33401f", true],
  ["CB", "Cigdem Baran", "#383838", "#fdeecb", "#86610c", true],
  ["BO", "Berk Oztekin", "#3c3a3a", "#cfe2d9", "#1c4b33", true],
  ["SS", "Serhat Sedef", "#383838", "#daf0f3", "#2d6a69", true],
  ["HB", "Halil Bakan (Partner)", "#302f2f", "#fde9da", "#8f5a2a", false],
  ["ZY", "Zakir Yenilmez (Partner)", "#343333", "#fdefcb", "#80610b", true],
];

const menus = [["Project", 36], ["Edit", 25.7], ["View", 29], ["Tools", 30.4], ["Debug", 36.6], ["Validation", 49.7], ["Window", 42.7], ["Help", 30]];

const mainTools = ["page", "open", "saveAll", "|", "cut", "copy", "paste", "|", "print", "|", "find", "|", "*sheets", "layer", "windowDot", "*grid", "windows", "tree", "|", "zoom", "|", "check", "checkRed", "okRound", "help2", "|", "back", "fwd", "|", "dbGear", "|", "help"];
const debugTools = ["timer", "|", "steps", "|", "dotDown", "dotSteps", "dotLines", "|", "stepOver", "stepIn", "stepOut", "|", "*record", "db", "dbPause", "|", "panelA", "panelB", "panelC"];
const paletteTools = ["*select", "work", "flow", "transIn", "bowtie", "table", "sheet", "message", "scriptPale", "branchDim", "loop", "ring", "catch", "doc"];
const taskIcons = [["win", 14], ["search", 13], ["taskView", 15], ["ie", 18], ["explorer", 17], ["server", 17], ["serverRun", 17], ["designer", 16], ["notebook", 17], ["monitor", 17], ["gear", 15, true]];

const project = [
  [0, "open", "folder", "Test_Batu"],
  [1, "open", "job", "New_Job57"],
  [2, "leaf", "script", "Script12422"],
  [2, "open", "branch", "Conditional12430", true],
  [3, "leaf", "flow", "New_DataFlow99"],
  [3, "leaf", "script", "Script12457"],
  [1, "closed", "job", "Batu_test"],
  [1, "closed", "job", "JB_FORD_TRUCKS_KALITE"],
];

const stores = ["BAYI", "BAYI", "Cassandra_Test", "Cassandra_Yeni", "Casssadra", "CLAW", "DATAMART", "DS_ASTERISK", "DS_ASTERISK_POSTGRE_TEST", "DS_AZURE_CONNECTTRUCK", "DS_AZURE_CRM_PROD", "DS_AZURE_PRODVP", "DS_BAYI", "DS_CM4D", "DS_CM4D_SITE", "DS_DataServices_Default_Repo", "DS_Datastore_02", "DS_DMARTFAO", "DS_EFATURA_YENI_CustomerManagement", "DS_EFATURA_YENI_KSEFatura_EFatura", "DS_FATS", "DS_FO_EFATURA", "DS_FO3PDB", "DS_FODB_TEST", "DS_GCKSV063_SCCM", "DS_JIRA", "DS_MIS_SQL_CORE", "DS_MIS_SQL_MANUMETRIC", "DS_MYIT", "DS_POSTGRESQL", "DS_SYBASE_TEST"];

const libraryTabs = [["folder", "Projects", 46.5], ["job", "Jobs", 38.5], ["work", "Work ...", 47], ["flow", "Data F...", 47], ["transform", "Transf...", 48], ["store", "Datast...", 46.5, true], ["format", "Form...", 47.5], ["fn", "Custo...", 47]];

const Tools = ({ items }) =>
  items.map((t, i) =>
    t === "|" ? (
      <ToolSep key={i} />
    ) : t === "zoom" ? (
      <Zoom key={i}>100% <Svg s={5}><path d="M2 4h12l-6 8z" fill="#777" /></Svg></Zoom>
    ) : (
      <ToolCell key={i} $active={t[0] === "*"}>
        <Icon n={t.replace("*", "")} />
      </ToolCell>
    )
  );

const LeftDock = () => (
  <Dock>
    <DockHeader><span>Project Area</span><Icon n="pin" s={9} /><Icon n="x" s={8} /></DockHeader>
    <ProjectTree>
      {project.map(([level, state, icon, label, sel]) => (
        <TreeRow key={label} $level={level}>
          <Expander $leaf={state === "leaf"} $open={state === "open"} />
          <Icon n={icon} />
          <TreeLabel $sel={sel}>{label}</TreeLabel>
        </TreeRow>
      ))}
    </ProjectTree>
    <DockTabs $h={16}>
      <DockTab $w={54} $ls={-0.1} $on><Icon n="design" />Designer</DockTab>
      <DockTab $w={53} $ls={0.05}><Icon n="light" />Monitor</DockTab>
      <DockTab $w={35}><Icon n="log" />Log</DockTab>
    </DockTabs>
    <Gap />
    <DockHeader><span>Local Object Library</span><Icon n="pin" s={9} /><Icon n="x" s={8} /></DockHeader>
    <Repo>Repository (User): DS_PROD (administrator)</Repo>
    <Library>
      <LibraryMain>
        <LibraryHead><span>Datastore</span><span>Usage</span><span>Description</span></LibraryHead>
        {stores.map((s, i) => (
          <TreeRow key={i} $level={0}>
            <Expander $gap={6} />
            <Icon n="store" s={10.5} />
            <TreeLabel $gap={3.5}>{s}</TreeLabel>
          </TreeRow>
        ))}
      </LibraryMain>
      <ScrollTrack>
        <Icon n="chevUp" s={8} />
        <Thumb $h={246} $mt={1} />
        <Icon n="chevDown" s={8} />
      </ScrollTrack>
    </Library>
    <DockTabs $h={18}>
      {libraryTabs.map(([icon, label, w, on]) => (
        <DockTab key={label} $w={w} $ls={-0.3} $on={on}><Icon n={icon} />{label}</DockTab>
      ))}
    </DockTabs>
  </Dock>
);

const EditorArea = () => (
  <Editor>
    <EditorPane>
      <Condition>
        <IfDiamond />
        <ConditionField>
          GV_CURRRENT_DATE =gv_cunretyear||'.01<Caret />.15' or GV_CURRRENT_DATE =gv_cunretyear||'.04.15' or GV_CURRRENT_DATE =gv_cunretyear||'.07.15' or GV_CURRRENT_DATE =gv_cunretyear||'.10.15'
        </ConditionField>
        <Browse>...</Browse>
      </Condition>
      <BranchLabel $h={14} $pt={0}>Then</BranchLabel>
      <Canvas $h={296}>
        <Node $x={198} $y={85}>
          <NodeLabel>New_DataFlow99</NodeLabel>
          <NodeBody><Port /><NodeBox><BigIcon n="flowBig" /></NodeBox><Port /></NodeBody>
        </Node>
        <ArrowMark $x={815} $y={165}><BigArrow /></ArrowMark>
        <ScrollTrack>
          <Icon n="chevUp" s={8} />
          <Thumb $h={194} $mt={2} />
          <Icon n="chevDown" s={8} />
        </ScrollTrack>
      </Canvas>
      <BranchLabel $h={15} $pt={2}>Else</BranchLabel>
      <Canvas $h={297} $edge>
        <Node $x={141} $y={122}>
          <NodeLabel $sel>Script12457</NodeLabel>
          <NodeBody><Port /><NodeBox $sel><BigIcon n="scriptBig" /></NodeBox><Port /></NodeBody>
        </Node>
        <ArrowMark $x={828} $y={165}><BigArrow /></ArrowMark>
      </Canvas>
    </EditorPane>
    <DocTabs>
      <TabScroll $w={12}><Icon n="triLeft" s={7} /></TabScroll>
      <DocTab $w={98.5} $pad={22} $gap={8} $slant><Icon n="job" s={9} />Batu_test - Job</DocTab>
      <DocTab $w={96} $pad={10} $gap={8}><Icon n="job" s={9} />New_Job57 - Job</DocTab>
      <DocTab $w={128} $pad={8} $gap={6}><Icon n="script" />Script12422 - Script Editor</DocTab>
      <DocTab $w={187} $pad={22} $gap={6} $on><Icon n="branch" />Conditional12430 - Conditional Editor</DocTab>
      <DocTab $w={126} $pad={8} $gap={6}><Icon n="script" />Script12457 - Script Editor</DocTab>
      <DocTab $w={142} $pad={8} $gap={8}><Icon n="flow" s={11} />New_DataFlow99 - Data Flow</DocTab>
      <TabScroll $w={20} $last><Icon n="triRight" s={7} /></TabScroll>
    </DocTabs>
  </Editor>
);

const RemoteDesktop = () => (
  <Remote>
    <AppTitle>
      <Icon n="sap" s={11} />
      <span>SAP Data Services Designer - [Conditional12430 - Conditional Editor]</span>
      <AppButtons><Icon n="dash" s={8} /><Icon n="restore" s={9} /><Icon n="thinX" s={9} /></AppButtons>
    </AppTitle>
    <Bars>
      <MenuRow>
        <Grip /><Icon n="branch" s={13} />
        <MenuItem $w={6} />
        {menus.map(([m, w]) => <MenuItem key={m} $w={w}>{m}</MenuItem>)}
        <MdiButtons><Icon n="dashBold" s={6} /><Icon n="restoreBold" s={7} /><Icon n="x" s={7} /></MdiButtons>
      </MenuRow>
      <ToolRow>
        <ToolStrip $w={450} $pad={1}><Grip /><Tools items={mainTools} /></ToolStrip>
        <ToolStrip $w={260} $pad={2}><Grip /><Tools items={debugTools} /></ToolStrip>
      </ToolRow>
    </Bars>
    <Body>
      <LeftDock />
      <Splitter />
      <EditorArea />
      <Palette>
        <PaletteStrip>
          {paletteTools.map((t) => (
            <ToolCell key={t} $vertical $active={t[0] === "*"}><Icon n={t.replace("*", "")} /></ToolCell>
          ))}
        </PaletteStrip>
      </Palette>
    </Body>
    <StatusBar>
      Ready
      <StatusCell $first $w={21} />
      <StatusCell $w={43} />
      <StatusCell $w={22}><Icon n="statusDb" /></StatusCell>
      <StatusCell $w={21}><Icon n="statusGrid" /></StatusCell>
      <StatusCell $w={20} />
      <StatusCell $w={23} $dim>CAP</StatusCell>
      <StatusCell $w={24}>NUM</StatusCell>
      <StatusCell $w={19} $dim>SCRL</StatusCell>
    </StatusBar>
    <TaskBar>
      {taskIcons.map(([n, s, on]) => (
        <TaskIcon key={n} $on={on}><Icon n={n} s={s} /></TaskIcon>
      ))}
      <Tray>
        <Icon n="up" s={11} />
        <Icon n="network" s={13} />
        <Icon n="mute" s={12} />
        <span>ENG</span>
        <Clock>08:41<br />22.10.2020</Clock>
        <Icon n="note" s={13} />
      </Tray>
    </TaskBar>
    <Activate><div>Activate Windows</div><p>Go to Settings to activate Windows.</p></Activate>
    <Connection>
      <ConnGroup $pad={24} $gap={7}><Icon n="cPin" s={9} /><Icon n="signal" s={8} /></ConnGroup>
      <span>10.20.6.213</span>
      <ConnGroup $pad={0} $gap={9}><Icon n="cDash" s={8} /><Icon n="cRestore" s={8} /><Icon n="cX" s={8} /></ConnGroup>
    </Connection>
    <Pointer><CursorGlyph /></Pointer>
  </Remote>
);

export default function App() {
  return (
    <Shell>
      <Global />
      <TitleBar>
        <MeetingTitle>Metric&amp;Ford - Daily</MeetingTitle>
        <WindowButtons>
          <Svg w={16} h={16}><path d="M0 8.500h16" stroke="#fff" strokeWidth="1.200" /></Svg>
          <Svg w={16} h={16}><path d="M.8.800h14.400v14.400H.8z" stroke="#d0cfce" strokeWidth="1.300" /></Svg>
          <Svg w={14} h={14}><path d="M1 1l14 14M15 1L1 15" stroke="#fff" strokeWidth="1.400" /></Svg>
        </WindowButtons>
      </TitleBar>
      <CallBar>
        <Timer>23:21</Timer>
        <RequestButton>Request control</RequestButton>
        <BarDivider $left={39} $right={14} />
        <CallIcons>
          <CallIcon $dim><PeopleGlyph /></CallIcon>
          <CallIcon $dim $nudge={3}><ChatGlyph /></CallIcon>
          <CallIcon $dim><HandGlyph /></CallIcon>
          <CallIcon $dim><DotsGlyph /></CallIcon>
        </CallIcons>
        <BarDivider $left={16} $right={15} />
        <CallIcons>
          <CallIcon><CameraOff /></CallIcon>
          <CallIcon $focused><MicGlyph /></CallIcon>
          <CallIcon><ShareGlyph /></CallIcon>
        </CallIcons>
        <LeaveButton><PhoneGlyph />Leave</LeaveButton>
      </CallBar>
      <Stage>
        <Presenter>Halil Bakan (Partner)</Presenter>
        <RemoteDesktop />
      </Stage>
      <FilmStrip>
        {people.map(([ini, name, bg, abg, afg, muted]) => (
          <Tile key={ini} $bg={bg}>
            <Avatar $bg={abg} $fg={afg}>{ini}</Avatar>
            <TileName>{name}{muted && <MutedMic />}</TileName>
          </Tile>
        ))}
      </FilmStrip>
    </Shell>
  );
}
